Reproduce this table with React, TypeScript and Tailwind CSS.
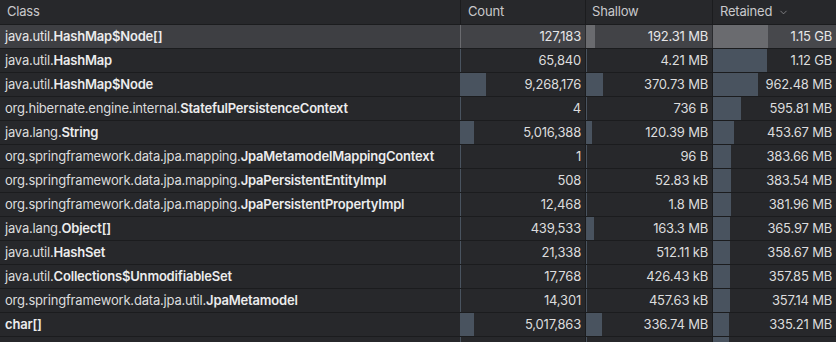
import {ChevronDown} from "lucide-react";

interface Row {
    pkg: string;
    name: string;
    count: string;
    shallow: string;
    retained: string;
    countBar: number;
    shallowBar: number;
    retainedBar: number;
}

const rows: Row[] = [
    {pkg: "java.util.", name: "HashMap$Node[]", count: "127,183", shallow: "192.31 MB", retained: "1.15 GB", countBar: 1, shallowBar: 9, retainedBar: 55},
    {pkg: "java.util.", name: "HashMap", count: "65,840", shallow: "4.21 MB", retained: "1.12 GB", countBar: 1, shallowBar: 1, retainedBar: 54},
    {pkg: "java.util.", name: "HashMap$Node", count: "9,268,176", shallow: "370.73 MB", retained: "962.48 MB", countBar: 26, shallowBar: 17, retainedBar: 45},
    {pkg: "org.hibernate.engine.internal.", name: "StatefulPersistenceContext", count: "4", shallow: "736 B", retained: "595.81 MB", countBar: 1, shallowBar: 1, retainedBar: 28},
    {pkg: "java.lang.", name: "String", count: "5,016,388", shallow: "120.39 MB", retained: "453.67 MB", countBar: 14, shallowBar: 6, retainedBar: 21},
    {pkg: "org.springframework.data.jpa.mapping.", name: "JpaMetamodelMappingContext", count: "1", shallow: "96 B", retained: "383.66 MB", countBar: 1, shallowBar: 1, retainedBar: 18},
    {pkg: "org.springframework.data.jpa.mapping.", name: "JpaPersistentEntityImpl", count: "508", shallow: "52.83 kB", retained: "383.54 MB", countBar: 1, shallowBar: 1, retainedBar: 18},
    {pkg: "org.springframework.data.jpa.mapping.", name: "JpaPersistentPropertyImpl", count: "12,468", shallow: "1.8 MB", retained: "381.96 MB", countBar: 1, shallowBar: 1, retainedBar: 18},
    {pkg: "java.lang.", name: "Object[]", count: "439,533", shallow: "163.3 MB", retained: "365.97 MB", countBar: 1, shallowBar: 8, retainedBar: 17},
    {pkg: "java.util.", name: "HashSet", count: "21,338", shallow: "512.11 kB", retained: "358.67 MB", countBar: 1, shallowBar: 1, retainedBar: 17},
    {pkg: "java.util.", name: "Collections$UnmodifiableSet", count: "17,768", shallow: "426.43 kB", retained: "357.85 MB", countBar: 1, shallowBar: 1, retainedBar: 17},
    {pkg: "org.springframework.data.jpa.util.", name: "JpaMetamodel", count: "14,301", shallow: "457.63 kB", retained: "357.14 MB", countBar: 1, shallowBar: 1, retainedBar: 17},
    {pkg: "", name: "char[]", count: "5,017,863", shallow: "336.74 MB", retained: "335.21 MB", countBar: 14, shallowBar: 16, retainedBar: 16},
];

const cols = "grid grid-cols-[460px_125px_127px_124px]";

const NumCell = ({value, bar, selected, bgClass}: {value: string; bar: number; selected: boolean; bgClass: string}) => (
    <div className={`relative h-full flex items-center justify-end pr-[4px] ${bgClass}`}>
        <div className={`absolute left-0 top-0 bottom-0 ${selected ? "bg-[#6a6b6f]" : "bg-[#49535f]"}`} style={{width: bar}}/>
        {value && <span className="relative">{value}</span>}
    </div>
);

const App = () => {
    return (
        <div className="w-[836px] h-[342px] overflow-hidden bg-[#27282b] text-[13px] tracking-[-0.015em] text-[#dcdcdd] font-['Inter','Noto_Sans',sans-serif]">
            <div className={`${cols} h-[25px] border-b border-[#1b1c1e] text-[#c9c9cb]`}>
                <div className="flex items-center pl-[7px]">Class</div>
                <div className="flex items-center pl-[7px] border-l border-[#1b1c1e]">Count</div>
                <div className="flex items-center pl-[6px] border-l border-[#1b1c1e]">Shallow</div>
                <div className="flex items-center gap-[6px] pl-[7px] border-l border-[#1b1c1e]">
                    Retained
                    <ChevronDown size={11} strokeWidth={1.5} className="text-[#a0a0a3]"/>
                </div>
            </div>
            {rows.map((r, i) => {
                const selected = i === 0;
                return (
                    <div key={r.name} className={`${cols} h-[24px] border-b border-[#1b1c1e] ${selected ? "bg-[#3e3f43] text-[#e6e6e7]" : ""}`}>
                        <div className="flex items-center pl-[5px] whitespace-nowrap overflow-hidden">
                            <span>{r.pkg}</span>
                            <span className="font-semibold text-[#ececed]">{r.name}</span>
                        </div>
                        <NumCell value={r.count} bar={r.countBar} selected={selected} bgClass={selected ? "bg-[#424347]" : ""}/>
                        <NumCell value={r.shallow} bar={r.shallowBar} selected={selected} bgClass={selected ? "bg-[#424347] border-l border-[#2a2b2e]" : "border-l border-[#1b1c1e]"}/>
                        <NumCell value={r.retained} bar={r.retainedBar} selected={selected} bgClass={selected ? "bg-[#47484c] border-l border-[#2a2b2e]" : "border-l border-[#1b1c1e]"}/>
                    </div>
                );
            })}
            {/* next row, only its top edge is in view */}
            <div className={`${cols} h-[24px]`}>
                <div/>
                <NumCell value="" bar={1} selected={false} bgClass=""/>
                <NumCell value="" bar={1} selected={false} bgClass="border-l border-[#1b1c1e]"/>
                <NumCell value="" bar={16} selected={false} bgClass="border-l border-[#1b1c1e]"/>
            </div>
        </div>
    );
};

export default App;
